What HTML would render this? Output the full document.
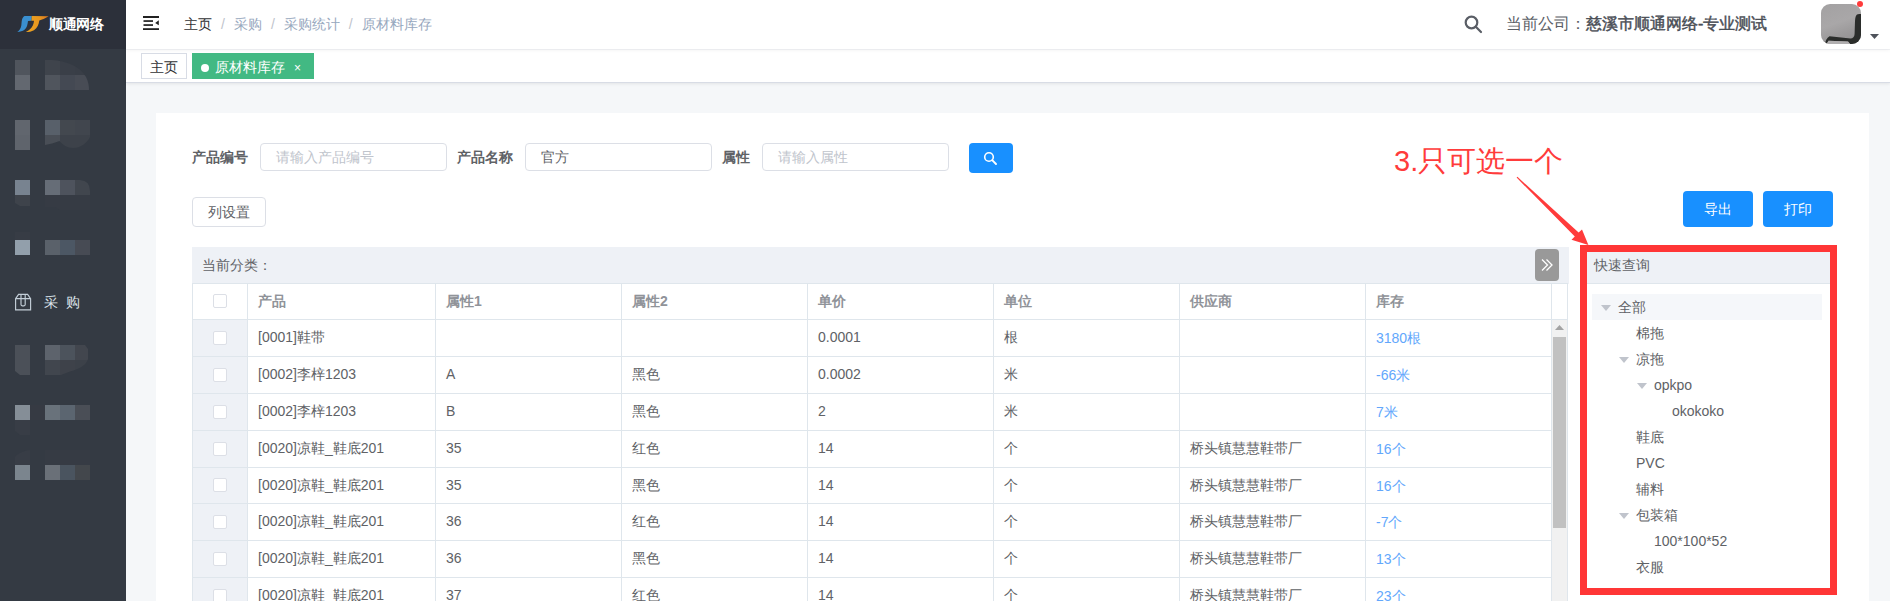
<!DOCTYPE html>
<html><head><meta charset="utf-8">
<style>
*{box-sizing:border-box;margin:0;padding:0}
html,body{width:1890px;height:601px;overflow:hidden}
body{position:relative;background:#f5f7f9;font-family:"Liberation Sans",sans-serif;font-size:14px;color:#606266}
.abs{position:absolute}
#side{left:0;top:0;width:126px;height:601px;background:#343a43}
#logo{left:0;top:0;width:126px;height:49px;background:#2c303a}
.mb{position:absolute}
#header{left:126px;top:0;width:1764px;height:49px;background:#fff;box-shadow:0 1px 4px rgba(0,21,41,.06);z-index:2}
#tags{left:126px;top:49px;width:1764px;height:34px;background:#fff;border-top:1px solid #f3f4f6;border-bottom:1px solid #d8dce5;box-shadow:0 1px 3px 0 rgba(0,0,0,.08)}
#card{left:156px;top:113px;width:1713px;height:500px;background:#fff}
.lbl{position:absolute;font-weight:bold;color:#606266;font-size:14px;line-height:28px;top:143px}
.inp{position:absolute;top:143px;height:28px;width:187px;border:1px solid #dcdfe6;border-radius:4px;font-size:14px;line-height:26px;padding-left:15px;color:#606266;background:#fff}
.ph{color:#c0c4cc}
.btnb{position:absolute;background:#1890ff;border-radius:4px;color:#fff;text-align:center}
.cell{position:absolute;white-space:nowrap}
</style></head><body>
<div id="side" class="abs">
 <div id="logo" class="abs">
  <svg class="abs" style="left:14px;top:12px" width="38" height="24" viewBox="14 12 38 24">
   <defs>
    <linearGradient id="go" x1="0" y1="0" x2="1" y2="0"><stop offset="0" stop-color="#eba322"/><stop offset="0.6" stop-color="#e8961f"/><stop offset="1" stop-color="#d9741e"/></linearGradient>
   </defs>
   <path d="M24.5 16 L31.8 16 L31.4 20.7 L28 20.9 C27.6 24.5 27 27.5 24.5 29.8 C22.5 31.3 20 31.8 17.3 32 C19.5 30.5 20.8 28.5 21.3 25.5 C21.8 22 21.5 17.5 24.5 16 Z" fill="#3a8fd0"/>
   <path d="M31.8 16 L48.6 16.3 C45 18.5 42 19.8 39.3 20.5 C38.7 24.5 37.5 28 34 30.3 C31.5 31.7 29 32 25.8 32 C29 30.5 31.5 28.5 32.8 25.5 C33.6 23.5 33.9 22 34 20.7 L31.4 20.7 Z" fill="url(#go)"/>
  </svg>
  <div class="abs" style="left:49px;top:14px;font-size:14px;line-height:20px;font-weight:bold;color:#fff;letter-spacing:-0.5px">顺通网络</div>
 </div>
 <!-- mosaic menu -->
 <svg class="abs" style="left:0;top:0" width="126" height="601" viewBox="0 0 126 601">
  <defs>
   <clipPath id="c1"><path d="M45 60 H52 C66 61 80 66 86 77 C88.5 82 89 86 89 90 H45 Z"/></clipPath>
   <clipPath id="c2"><path d="M45 120 H90 V137 C87 143 81 148 73 148 C67 148 63 145 59.5 141 L52 143.5 L45 145 Z"/></clipPath>
   <clipPath id="c3"><path d="M45 180 H80 Q90 180.5 90 191 V210 H60 L55 207 H45 Z"/></clipPath>
   <clipPath id="c3l"><path d="M15 180 H30 V206 H20 L15 203 Z"/></clipPath>
   <clipPath id="c5"><path d="M45 345 H85 L88 349 V359 C86 365 80 369 70 371.5 L61 375 H45 Z"/></clipPath>
   <clipPath id="c5l"><path d="M15 345 H30 V375 H20 L15 371 Z"/></clipPath>
  </defs>
  <rect x="15" y="60" width="15" height="15" fill="#50555d"/>
  <rect x="15" y="75" width="15" height="15" fill="#636870"/>
  <g clip-path="url(#c1)">
   <rect x="45" y="60" width="15" height="15" fill="#3f444c"/>
   <rect x="60" y="60" width="15" height="15" fill="#3a3f48"/>
   <rect x="75" y="60" width="15" height="15" fill="#393e47"/>
   <rect x="45" y="75" width="15" height="15" fill="#50555d"/>
   <rect x="60" y="75" width="15" height="15" fill="#444953"/>
   <rect x="75" y="75" width="15" height="15" fill="#484c55"/>
  </g>
  <rect x="15" y="120" width="15" height="15" fill="#61666e"/>
  <rect x="15" y="135" width="15" height="15" fill="#5f646c"/>
  <g clip-path="url(#c2)">
   <rect x="45" y="120" width="15" height="15" fill="#58606a"/>
   <rect x="60" y="120" width="15" height="15" fill="#43484f"/>
   <rect x="75" y="120" width="15" height="15" fill="#41464e"/>
   <rect x="45" y="135" width="15" height="15" fill="#494e56"/>
   <rect x="60" y="135" width="30" height="15" fill="#3d424a"/>
  </g>
  <g clip-path="url(#c3l)">
   <rect x="15" y="180" width="15" height="15" fill="#788390"/>
   <rect x="15" y="195" width="15" height="15" fill="#3e434b"/>
  </g>
  <g clip-path="url(#c3)">
   <rect x="45" y="180" width="15" height="15" fill="#666d77"/>
   <rect x="60" y="180" width="15" height="15" fill="#4e535d"/>
   <rect x="75" y="180" width="15" height="15" fill="#41464e"/>
   <rect x="45" y="195" width="45" height="15" fill="#363b44"/>
  </g>
  <rect x="15" y="232" width="15" height="8" fill="#373c45"/>
  <rect x="15" y="240" width="15" height="15" fill="#929fab"/>
  <rect x="45" y="240" width="15" height="15" fill="#5a616a"/>
  <rect x="60" y="240" width="15" height="15" fill="#4c5764"/>
  <rect x="75" y="240" width="15" height="15" fill="#474b54"/>
  <g clip-path="url(#c5l)"><rect x="15" y="345" width="15" height="30" fill="#4b5058"/></g>
  <g clip-path="url(#c5)">
   <rect x="45" y="345" width="15" height="15" fill="#5d636c"/>
   <rect x="60" y="345" width="15" height="15" fill="#4c535c"/>
   <rect x="75" y="345" width="15" height="15" fill="#42464e"/>
   <rect x="45" y="360" width="15" height="15" fill="#41464e"/>
   <rect x="60" y="360" width="15" height="15" fill="#3e424a"/>
   <rect x="75" y="360" width="15" height="15" fill="#3c4149"/>
  </g>
  <rect x="30" y="405" width="15" height="15" fill="#363a43"/>
  <rect x="15" y="405" width="15" height="15" fill="#858e97"/>
  <path d="M15 420 H30 V435 H20 L15 431 Z" fill="#383d46"/>
  <rect x="45" y="405" width="15" height="15" fill="#69727b"/>
  <rect x="60" y="405" width="15" height="15" fill="#5b6570"/>
  <rect x="75" y="405" width="15" height="15" fill="#4a4e56"/>
  <path d="M15 457 C18 453 24 450.5 30 450 V465 H15 Z" fill="#383d46"/>
  <rect x="45" y="450" width="45" height="15" fill="#363b44"/>
  <rect x="15" y="465" width="15" height="15" fill="#7b858e"/>
  <rect x="45" y="465" width="15" height="15" fill="#6a7078"/>
  <rect x="60" y="465" width="15" height="15" fill="#4a545f"/>
  <rect x="75" y="465" width="15" height="15" fill="#43474c"/>
 </svg>
 <svg class="abs" style="left:14px;top:293px" width="18" height="18" viewBox="0 0 18 18" fill="none" stroke="#c3ced8" stroke-width="1.15">
  <path d="M1.6 5.6 L4.6 1.4 H13.6 L16.6 5.6 V16.9 H1.6 Z M1.6 5.6 H16.6 M7 1.4 V11.6 Q7 12.8 8.2 12.8 H10 Q11.2 12.8 11.2 11.6 V1.4"/>
 </svg>
 <div class="abs" style="left:44px;top:293px;font-size:14px;line-height:18px;color:#dde4ea;letter-spacing:8px">采购</div>

 </div>

<div id="header" class="abs">
 <svg class="abs" style="left:17px;top:16px" width="16" height="14" viewBox="0 0 16 14">
  <rect x="0" y="0" width="16" height="2" fill="#222"/>
  <rect x="0.5" y="4.2" width="9.5" height="1.7" fill="#222"/>
  <rect x="0.5" y="8.2" width="9.5" height="1.7" fill="#222"/>
  <rect x="0" y="12.2" width="16" height="1.8" fill="#222"/>
  <path d="M12.2 7 L15.8 4.2 V9.3 Z" fill="#222"/>
 </svg>
 <div class="abs" style="left:58px;top:14px;font-size:14px;line-height:20px;white-space:nowrap">
  <span style="color:#303133">主页</span><span style="color:#c0c4cc;margin:0 9px">/</span><span style="color:#97a8be">采购</span><span style="color:#c0c4cc;margin:0 9px">/</span><span style="color:#97a8be">采购统计</span><span style="color:#c0c4cc;margin:0 9px">/</span><span style="color:#97a8be">原材料库存</span>
 </div>
 <svg class="abs" style="left:1338px;top:15px" width="19" height="19" viewBox="0 0 19 19" fill="none" stroke="#5a5e66" stroke-width="2.2">
  <circle cx="7.5" cy="7.5" r="5.8"/><path d="M11.8 11.8 L17 17" stroke-linecap="round"/>
 </svg>
 <div class="abs" style="left:1380px;top:13px;font-size:16px;line-height:22px;white-space:nowrap;color:#5a5e66">当前公司：<span style="color:#4a4e56;-webkit-text-stroke:0.45px #4a4e56">慈溪市顺通网络-专业测试</span></div>
 <div class="abs" style="left:1695px;top:4px;width:40px;height:40px;border-radius:9px;overflow:hidden;background:linear-gradient(160deg,#a3a1a2 0%,#a9a7a8 45%,#9b999a 70%,#8f8d8e 100%)">
  <svg width="40" height="40" viewBox="0 0 40 40" style="position:absolute;left:0;top:0">
   <path d="M36 10.5 C38 10 40 10 41 10 V41 H30 L27 37.6 L7.5 36.8 C6.5 38 6 40 5.5 41 H3.8 C4.2 37.5 5.5 33.8 8.5 32.2 L29.5 34.4 C32 34.4 33.4 33 33.6 30 L34 17 C34.2 13.5 34.8 11.5 36 10.5 Z" fill="#2b2d2b"/>
   <path d="M7.5 36.8 L27 37.6 L30 41 H5.5 C6 40 6.5 38 7.5 36.8 Z" fill="#b1afb0"/>
  </svg>
 </div>
 <div class="abs" style="left:1731px;top:1px;width:6.4px;height:6.4px;border-radius:50%;background:#ff3b3b"></div>
 <svg class="abs" style="left:1744px;top:34px" width="9" height="5" viewBox="0 0 9 5"><path d="M0 0 H9 L4.5 5 Z" fill="#4f535b"/></svg>
</div>

<div id="tags" class="abs">
 <div class="abs" style="left:15px;top:3px;width:46px;height:26px;border:1px solid #d8dce5;background:#fff;color:#303133;font-size:14px;line-height:26px;text-align:center">主页</div>
 <div class="abs" style="left:66px;top:3px;width:122px;height:26px;background:#42b983;color:#fff;font-size:14px;line-height:26px;white-space:nowrap">
  <span class="abs" style="left:9px;top:11px;width:8px;height:8px;border-radius:50%;background:#fff"></span>
  <span class="abs" style="left:23px;top:1px">原材料库存</span>
  <span class="abs" style="left:102px;top:2px;font-size:12px">×</span>
 </div>
</div>
<div id="card" class="abs"></div>
<div class="lbl" style="left:192px">产品编号</div>
<div class="inp ph" style="left:260px">请输入产品编号</div>
<div class="lbl" style="left:457px">产品名称</div>
<div class="inp" style="left:525px">官方</div>
<div class="lbl" style="left:722px">属性</div>
<div class="inp ph" style="left:762px">请输入属性</div>
<div class="btnb" style="left:969px;top:143px;width:44px;height:30px">
 <svg class="abs" style="left:14px;top:8px" width="15" height="15" viewBox="0 0 15 15" fill="none" stroke="#fff" stroke-width="1.6"><circle cx="6" cy="6" r="4.3"/><path d="M9.2 9.2 L13 13" stroke-linecap="round" stroke-width="1.9"/></svg>
</div>
<div class="abs" style="left:192px;top:197px;width:74px;height:30px;border:1px solid #dcdfe6;border-radius:4px;background:#fff;color:#606266;font-size:14px;line-height:28px;text-align:center">列设置</div>
<div class="btnb" style="left:1683px;top:191px;width:70px;height:36px;font-size:14px;line-height:36px;font-weight:500">导出</div>
<div class="btnb" style="left:1763px;top:191px;width:70px;height:36px;font-size:14px;line-height:36px;font-weight:500">打印</div>
<div class="abs" style="left:192px;top:247px;width:1377px;height:37px;background:#eef1f6"></div>
<div class="abs" style="left:202px;top:255px;font-size:14px;line-height:20px;color:#606266">当前分类：</div>
<div class="abs" style="left:1535px;top:249px;width:24px;height:32px;border-radius:4px;background:#999"><svg class="abs" style="left:5px;top:9px" width="14" height="14" viewBox="0 0 14 14" fill="none" stroke="#fff" stroke-width="1.3"><path d="M2 1.5 L7.5 7 L2 12.5 M6.5 1.5 L12 7 L6.5 12.5"/></svg></div>
<div class="abs" style="left:192px;top:283px;width:1376px;height:318px;background:#fff;border:1px solid #dfe6ec;border-bottom:none"></div>
<div class="abs" style="left:193px;top:320px;width:54px;height:281px;background:#eef1f6"></div>
<div class="abs" style="left:1552px;top:320px;width:15px;height:281px;background:#f1f1f1"></div>
<div class="abs" style="left:1553px;top:337px;width:13px;height:191px;background:#c1c1c1"></div>
<svg class="abs" style="left:1555px;top:325px" width="9" height="6" viewBox="0 0 9 6"><path d="M0 5 L4.5 0 L9 5 Z" fill="#a3a3a3"/></svg>
<div class="abs" style="left:193px;top:319px;width:1375px;height:1px;background:#dfe6ec"></div>
<div class="abs" style="left:193px;top:356px;width:1359px;height:1px;background:#dfe6ec"></div>
<div class="abs" style="left:193px;top:393px;width:1359px;height:1px;background:#dfe6ec"></div>
<div class="abs" style="left:193px;top:430px;width:1359px;height:1px;background:#dfe6ec"></div>
<div class="abs" style="left:193px;top:467px;width:1359px;height:1px;background:#dfe6ec"></div>
<div class="abs" style="left:193px;top:503px;width:1359px;height:1px;background:#dfe6ec"></div>
<div class="abs" style="left:193px;top:540px;width:1359px;height:1px;background:#dfe6ec"></div>
<div class="abs" style="left:193px;top:577px;width:1359px;height:1px;background:#dfe6ec"></div>
<div class="abs" style="left:247px;top:283px;width:1px;height:318px;background:#dfe6ec"></div>
<div class="abs" style="left:435px;top:283px;width:1px;height:318px;background:#dfe6ec"></div>
<div class="abs" style="left:621px;top:283px;width:1px;height:318px;background:#dfe6ec"></div>
<div class="abs" style="left:807px;top:283px;width:1px;height:318px;background:#dfe6ec"></div>
<div class="abs" style="left:993px;top:283px;width:1px;height:318px;background:#dfe6ec"></div>
<div class="abs" style="left:1179px;top:283px;width:1px;height:318px;background:#dfe6ec"></div>
<div class="abs" style="left:1365px;top:283px;width:1px;height:318px;background:#dfe6ec"></div>
<div class="abs" style="left:1551px;top:283px;width:1px;height:318px;background:#dfe6ec"></div>
<div class="abs" style="left:213px;top:294px;width:14px;height:14px;border:1px solid #dcdfe6;border-radius:2px;background:#fff"></div>
<div class="cell" style="left:258px;top:291px;line-height:20px;font-weight:bold;color:#909399">产品</div>
<div class="cell" style="left:446px;top:291px;line-height:20px;font-weight:bold;color:#909399">属性1</div>
<div class="cell" style="left:632px;top:291px;line-height:20px;font-weight:bold;color:#909399">属性2</div>
<div class="cell" style="left:818px;top:291px;line-height:20px;font-weight:bold;color:#909399">单价</div>
<div class="cell" style="left:1004px;top:291px;line-height:20px;font-weight:bold;color:#909399">单位</div>
<div class="cell" style="left:1190px;top:291px;line-height:20px;font-weight:bold;color:#909399">供应商</div>
<div class="cell" style="left:1376px;top:291px;line-height:20px;font-weight:bold;color:#909399">库存</div>
<div class="abs" style="left:213px;top:331px;width:14px;height:14px;border:1px solid #dcdfe6;border-radius:2px;background:#fff"></div>
<div class="cell" style="left:258px;top:327.0px;line-height:20px;color:#606266">[0001]鞋带</div>
<div class="cell" style="left:818px;top:327.0px;line-height:20px;color:#606266">0.0001</div>
<div class="cell" style="left:1004px;top:327.0px;line-height:20px;color:#606266">根</div>
<div class="cell" style="left:1376px;top:328.0px;line-height:20px;color:#62a7fc">3180根</div>
<div class="abs" style="left:213px;top:368px;width:14px;height:14px;border:1px solid #dcdfe6;border-radius:2px;background:#fff"></div>
<div class="cell" style="left:258px;top:364.0px;line-height:20px;color:#606266">[0002]李梓1203</div>
<div class="cell" style="left:446px;top:364.0px;line-height:20px;color:#606266">A</div>
<div class="cell" style="left:632px;top:364.0px;line-height:20px;color:#606266">黑色</div>
<div class="cell" style="left:818px;top:364.0px;line-height:20px;color:#606266">0.0002</div>
<div class="cell" style="left:1004px;top:364.0px;line-height:20px;color:#606266">米</div>
<div class="cell" style="left:1376px;top:365.0px;line-height:20px;color:#62a7fc">-66米</div>
<div class="abs" style="left:213px;top:405px;width:14px;height:14px;border:1px solid #dcdfe6;border-radius:2px;background:#fff"></div>
<div class="cell" style="left:258px;top:401.0px;line-height:20px;color:#606266">[0002]李梓1203</div>
<div class="cell" style="left:446px;top:401.0px;line-height:20px;color:#606266">B</div>
<div class="cell" style="left:632px;top:401.0px;line-height:20px;color:#606266">黑色</div>
<div class="cell" style="left:818px;top:401.0px;line-height:20px;color:#606266">2</div>
<div class="cell" style="left:1004px;top:401.0px;line-height:20px;color:#606266">米</div>
<div class="cell" style="left:1376px;top:402.0px;line-height:20px;color:#62a7fc">7米</div>
<div class="abs" style="left:213px;top:442px;width:14px;height:14px;border:1px solid #dcdfe6;border-radius:2px;background:#fff"></div>
<div class="cell" style="left:258px;top:438.0px;line-height:20px;color:#606266">[0020]凉鞋_鞋底201</div>
<div class="cell" style="left:446px;top:438.0px;line-height:20px;color:#606266">35</div>
<div class="cell" style="left:632px;top:438.0px;line-height:20px;color:#606266">红色</div>
<div class="cell" style="left:818px;top:438.0px;line-height:20px;color:#606266">14</div>
<div class="cell" style="left:1004px;top:438.0px;line-height:20px;color:#606266">个</div>
<div class="cell" style="left:1190px;top:438.0px;line-height:20px;color:#606266">桥头镇慧慧鞋带厂</div>
<div class="cell" style="left:1376px;top:439.0px;line-height:20px;color:#62a7fc">16个</div>
<div class="abs" style="left:213px;top:478px;width:14px;height:14px;border:1px solid #dcdfe6;border-radius:2px;background:#fff"></div>
<div class="cell" style="left:258px;top:474.5px;line-height:20px;color:#606266">[0020]凉鞋_鞋底201</div>
<div class="cell" style="left:446px;top:474.5px;line-height:20px;color:#606266">35</div>
<div class="cell" style="left:632px;top:474.5px;line-height:20px;color:#606266">黑色</div>
<div class="cell" style="left:818px;top:474.5px;line-height:20px;color:#606266">14</div>
<div class="cell" style="left:1004px;top:474.5px;line-height:20px;color:#606266">个</div>
<div class="cell" style="left:1190px;top:474.5px;line-height:20px;color:#606266">桥头镇慧慧鞋带厂</div>
<div class="cell" style="left:1376px;top:475.5px;line-height:20px;color:#62a7fc">16个</div>
<div class="abs" style="left:213px;top:515px;width:14px;height:14px;border:1px solid #dcdfe6;border-radius:2px;background:#fff"></div>
<div class="cell" style="left:258px;top:511.0px;line-height:20px;color:#606266">[0020]凉鞋_鞋底201</div>
<div class="cell" style="left:446px;top:511.0px;line-height:20px;color:#606266">36</div>
<div class="cell" style="left:632px;top:511.0px;line-height:20px;color:#606266">红色</div>
<div class="cell" style="left:818px;top:511.0px;line-height:20px;color:#606266">14</div>
<div class="cell" style="left:1004px;top:511.0px;line-height:20px;color:#606266">个</div>
<div class="cell" style="left:1190px;top:511.0px;line-height:20px;color:#606266">桥头镇慧慧鞋带厂</div>
<div class="cell" style="left:1376px;top:512.0px;line-height:20px;color:#62a7fc">-7个</div>
<div class="abs" style="left:213px;top:552px;width:14px;height:14px;border:1px solid #dcdfe6;border-radius:2px;background:#fff"></div>
<div class="cell" style="left:258px;top:548.0px;line-height:20px;color:#606266">[0020]凉鞋_鞋底201</div>
<div class="cell" style="left:446px;top:548.0px;line-height:20px;color:#606266">36</div>
<div class="cell" style="left:632px;top:548.0px;line-height:20px;color:#606266">黑色</div>
<div class="cell" style="left:818px;top:548.0px;line-height:20px;color:#606266">14</div>
<div class="cell" style="left:1004px;top:548.0px;line-height:20px;color:#606266">个</div>
<div class="cell" style="left:1190px;top:548.0px;line-height:20px;color:#606266">桥头镇慧慧鞋带厂</div>
<div class="cell" style="left:1376px;top:549.0px;line-height:20px;color:#62a7fc">13个</div>
<div class="abs" style="left:213px;top:589px;width:14px;height:14px;border:1px solid #dcdfe6;border-radius:2px;background:#fff"></div>
<div class="cell" style="left:258px;top:585.0px;line-height:20px;color:#606266">[0020]凉鞋_鞋底201</div>
<div class="cell" style="left:446px;top:585.0px;line-height:20px;color:#606266">37</div>
<div class="cell" style="left:632px;top:585.0px;line-height:20px;color:#606266">红色</div>
<div class="cell" style="left:818px;top:585.0px;line-height:20px;color:#606266">14</div>
<div class="cell" style="left:1004px;top:585.0px;line-height:20px;color:#606266">个</div>
<div class="cell" style="left:1190px;top:585.0px;line-height:20px;color:#606266">桥头镇慧慧鞋带厂</div>
<div class="cell" style="left:1376px;top:586.0px;line-height:20px;color:#62a7fc">23个</div>
<div class="abs" style="left:1394px;top:141px;font-size:29px;line-height:40px;color:#ff3b3b;white-space:nowrap">3.只可选一个</div>
<svg class="abs" style="left:1500px;top:170px" width="100" height="80" viewBox="1500 170 100 80">
 <path d="M1516.6 177.6 L1517.4 176.8 L1578.6 232.6 L1582 229.4 L1588.4 245 L1571.5 239.8 L1574.8 236.6 Z" fill="#ff3b3b"/>
</svg>
<div class="abs" style="left:1580px;top:245px;width:257px;height:350px;border:7px solid #ff3636"></div>
<div class="abs" style="left:1587px;top:252px;width:243px;height:32px;background:#eef1f6;border-bottom:1px solid #dfe6ec"></div>
<div class="abs" style="left:1594px;top:255px;font-size:14px;line-height:20px;color:#606266">快速查询</div>
<div class="abs" style="left:1592px;top:294px;width:230px;height:26px;background:#f5f7fa"></div>
<svg class="abs" style="left:1601px;top:305px" width="10" height="6" viewBox="0 0 10 6"><path d="M0 0 H10 L5 6 Z" fill="#c0c4cc"/></svg>
<div class="abs" style="left:1618px;top:297px;font-size:14px;line-height:20px;color:#606266">全部</div>
<div class="abs" style="left:1636px;top:323px;font-size:14px;line-height:20px;color:#606266">棉拖</div>
<svg class="abs" style="left:1619px;top:357px" width="10" height="6" viewBox="0 0 10 6"><path d="M0 0 H10 L5 6 Z" fill="#c0c4cc"/></svg>
<div class="abs" style="left:1636px;top:349px;font-size:14px;line-height:20px;color:#606266">凉拖</div>
<svg class="abs" style="left:1637px;top:383px" width="10" height="6" viewBox="0 0 10 6"><path d="M0 0 H10 L5 6 Z" fill="#c0c4cc"/></svg>
<div class="abs" style="left:1654px;top:375px;font-size:14px;line-height:20px;color:#606266">opkpo</div>
<div class="abs" style="left:1672px;top:401px;font-size:14px;line-height:20px;color:#606266">okokoko</div>
<div class="abs" style="left:1636px;top:427px;font-size:14px;line-height:20px;color:#606266">鞋底</div>
<div class="abs" style="left:1636px;top:453px;font-size:14px;line-height:20px;color:#606266">PVC</div>
<div class="abs" style="left:1636px;top:479px;font-size:14px;line-height:20px;color:#606266">辅料</div>
<svg class="abs" style="left:1619px;top:513px" width="10" height="6" viewBox="0 0 10 6"><path d="M0 0 H10 L5 6 Z" fill="#c0c4cc"/></svg>
<div class="abs" style="left:1636px;top:505px;font-size:14px;line-height:20px;color:#606266">包装箱</div>
<div class="abs" style="left:1654px;top:531px;font-size:14px;line-height:20px;color:#606266">100*100*52</div>
<div class="abs" style="left:1636px;top:557px;font-size:14px;line-height:20px;color:#606266">衣服</div>

</body></html>
